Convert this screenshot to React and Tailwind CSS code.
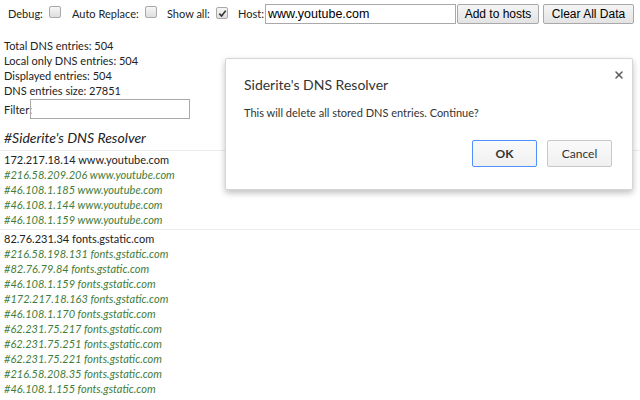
import { X } from "lucide-react";

const youtube = [
  { ip: "172.217.18.14", on: true },
  { ip: "216.58.209.206" },
  { ip: "46.108.1.185" },
  { ip: "46.108.1.144" },
  { ip: "46.108.1.159" },
];

const gstatic = [
  { ip: "82.76.231.34", on: true },
  { ip: "216.58.198.131" },
  { ip: "82.76.79.84" },
  { ip: "46.108.1.159" },
  { ip: "172.217.18.163" },
  { ip: "46.108.1.170" },
  { ip: "62.231.75.217" },
  { ip: "62.231.75.251" },
  { ip: "62.231.75.221" },
  { ip: "216.58.208.35" },
  { ip: "46.108.1.155" },
];

const ui = { fontFamily: "Lato, 'Open Sans', sans-serif" };
const arial = { fontFamily: "'Liberation Sans', Arial, sans-serif" };

function Check({ checked }) {
  return (
    <span className="inline-flex h-[12px] w-[12px] shrink-0 items-center justify-center rounded-[2px] border border-[#a9a9a9] bg-gradient-to-b from-[#f6f6f6] to-[#dedede]">
      {checked && (
        <svg width="9" height="9" viewBox="0 0 10 10">
          <path d="M1.5 5.2 L4 7.8 L8.6 1.8" fill="none" stroke="#333" strokeWidth="1.8" />
        </svg>
      )}
    </span>
  );
}

function Group({ host, rows }) {
  return (
    <div className="border-t border-[#ececec] px-1 pt-[1px] pb-[2px]">
      {rows.map((r, i) =>
        r.on ? (
          <div key={i} className="h-[15px] leading-[15px] text-[#222]">
            {r.ip} {host}
          </div>
        ) : (
          <div key={i} className="h-[15px] leading-[15px] italic text-[#3f7d3a]">
            #{r.ip} {host}
          </div>
        )
      )}
    </div>
  );
}

export default function App() {
  return (
    <div className="relative h-[400px] w-[640px] overflow-hidden bg-white text-[11px] text-[#222]" style={ui}>
      {/* toolbar */}
      <div className="flex h-[28px] items-center whitespace-nowrap pl-2">
        <span className="w-[36px] shrink-0">Debug:</span>
        <span className="ml-[5px]"><Check /></span>
        <span className="ml-[11px] w-[67px] shrink-0">Auto Replace:</span>
        <span className="ml-[6px]"><Check /></span>
        <span className="ml-[10px] w-[44px] shrink-0">Show all:</span>
        <span className="ml-[5px]"><Check checked /></span>
        <span className="ml-[10px] w-[26px] shrink-0">Host:</span>
        <input
          readOnly
          value="www.youtube.com"
          className="ml-[1px] h-[20px] w-[191px] shrink-0 border border-[#a9a9a9] px-[2px] text-[12.5px] text-black outline-none"
          style={arial}
        />
        <button
          className="ml-[1px] h-[20px] w-[82px] shrink-0 rounded-[2px] border border-[#a9a9a9] bg-gradient-to-b from-[#f5f5f5] to-[#e3e3e3] text-[12px] text-black"
          style={arial}
        >
          Add to hosts
        </button>
        <button
          className="ml-[4px] h-[20px] w-[91px] shrink-0 rounded-[2px] border border-[#a9a9a9] bg-gradient-to-b from-[#f5f5f5] to-[#e3e3e3] text-[12px] text-black"
          style={arial}
        >
          Clear All Data
        </button>
      </div>

      {/* stats */}
      <div className="mt-[10px] px-1 leading-[15px]">
        <div>Total DNS entries: 504</div>
        <div>Local only DNS entries: 504</div>
        <div>Displayed entries: 504</div>
        <div>DNS entries size: 27851</div>
        <div className="mt-[1px] flex items-center">
          <span className="w-[26px]">Filter:</span>
          <input readOnly className="h-[20px] w-[160px] border border-[#a9a9a9] outline-none" />
        </div>
      </div>

      <div className="mt-[10px] px-1 text-[14px] italic leading-[18px] text-[#222]">#Siderite's DNS Resolver</div>

      <div className="mt-[3px]">
        <Group host="www.youtube.com" rows={youtube} />
        <Group host="fonts.gstatic.com" rows={gstatic} />
      </div>

      {/* confirm dialog */}
      <div className="absolute left-[225px] top-[58px] h-[132px] w-[408px] rounded-[2px] border border-[#d6d6d6] bg-white shadow-[0_3px_6px_rgba(0,0,0,0.25)]">
        <button className="absolute right-[7px] top-[10px] text-[#5a5a5a]">
          <X size={12} strokeWidth={3} />
        </button>
        <div className="pl-[18px] pt-[16px] text-[14px] leading-[20px] text-[#333]">Siderite's DNS Resolver</div>
        <div className="mt-[10px] pl-[18px] text-[11px] leading-[16px] text-[#333]">
          This will delete all stored DNS entries. Continue?
        </div>
        <div className="mt-[19px] flex justify-end gap-[10px] pr-[20px]">
          <button className="h-[27px] w-[65px] rounded-[2px] border border-[#4d90fe] bg-gradient-to-b from-[#fafafa] to-[#f0f0f0] text-[12px] font-bold text-[#333]">
            OK
          </button>
          <button className="h-[27px] w-[65px] rounded-[2px] border border-[#c8c8c8] bg-gradient-to-b from-[#fafafa] to-[#f0f0f0] text-[12px] text-[#333]">
            Cancel
          </button>
        </div>
      </div>
    </div>
  );
}
